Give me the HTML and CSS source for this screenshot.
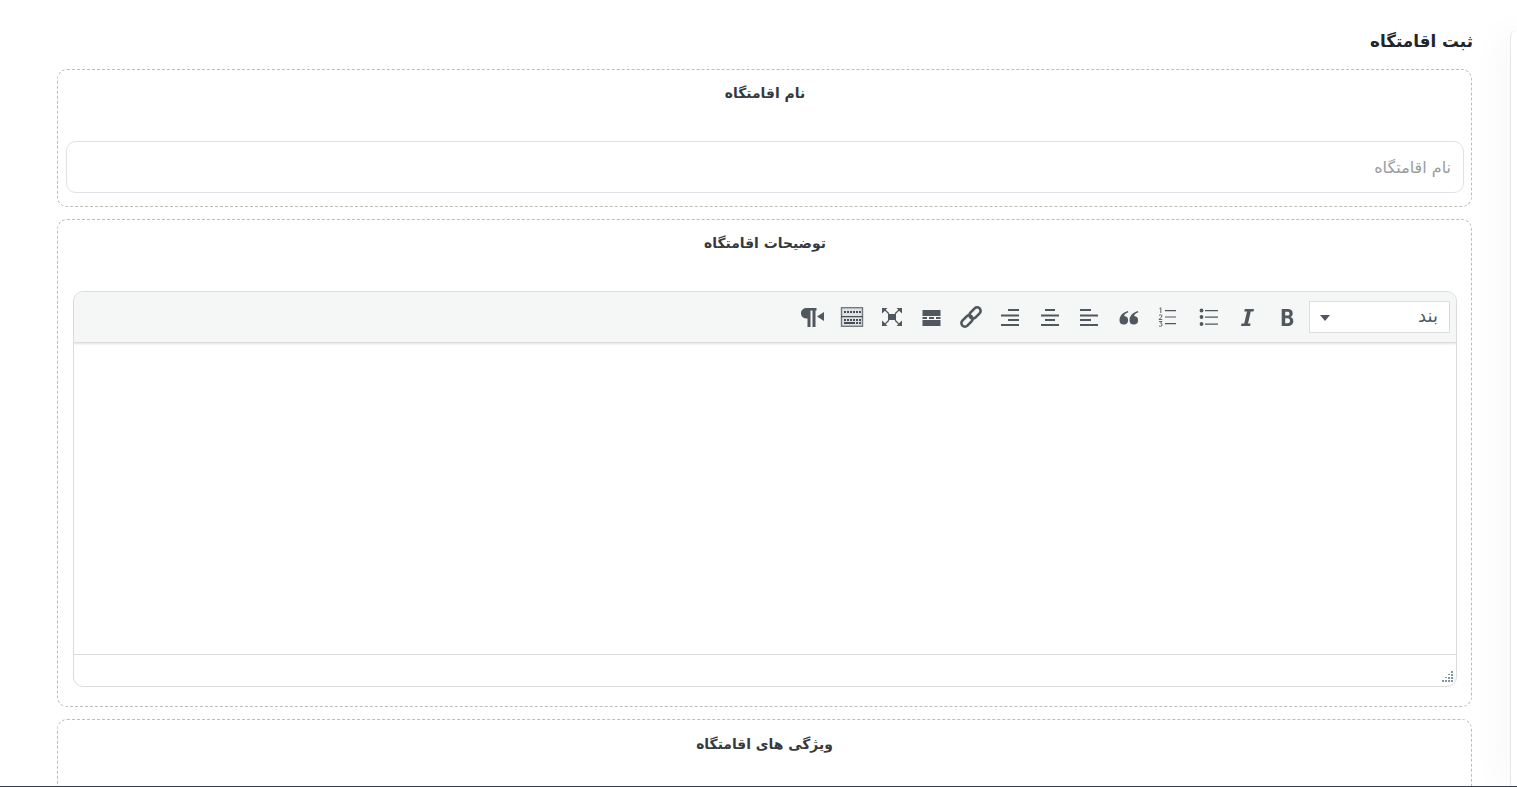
FILE: index.html
```html
<!DOCTYPE html>
<html lang="fa" dir="rtl">
<head>
    <meta charset="UTF-8">
    <meta name="viewport" content="width=device-width, initial-scale=1.0">
    <title>ثبت اقامتگاه</title>
    <link rel="stylesheet" href="styles.css">
</head>
<body>

<div class="page">
    <aside class="side-panel"></aside>

    <main class="content">
        <h1 class="page-title">ثبت اقامتگاه</h1>

        <section class="box box-name">
            <h2 class="box-title">نام اقامتگاه</h2>
            <input class="text-input" type="text" placeholder="نام اقامتگاه">
        </section>

        <section class="box box-desc">
            <h2 class="box-title">توضیحات اقامتگاه</h2>
            <div class="editor">
                <div class="toolbar">
                    <div class="format-select">
                        <span>بند</span>
                        <i class="caret"></i>
                    </div>
                    <div class="tools">
                        <!-- bold -->
                        <button class="tool"><svg viewBox="0 0 20 20"><path fill="#50575e" fill-rule="evenodd" d="M4.700 2h6c3.500 0 5 1.600 5 4.400 0 1.800-.9 3-2.400 3.600 2 .5 3 1.900 3 4 0 3.200-2.200 5-5.600 5h-6zM8.200 4.800v3.800h2.200c1.500 0 2.100-.6 2.100-1.900s-.7-1.900-2.100-1.900zM8.200 11.300v4.900h2.500c1.600 0 2.300-.8 2.300-2.400s-.8-2.500-2.400-2.500z"/></svg></button>
                        <!-- italic -->
                        <button class="tool"><svg viewBox="0 0 20 20"><path fill="#50575e" d="M7.800 2H17l-.5 2.400h-2.700L11 16.600h2.600l-.5 2.400H4l.5-2.400h2.700L10 4.400H7.300z"/></svg></button>
                        <!-- bullet list -->
                        <button class="tool"><svg viewBox="0 0 20 20"><g fill="#50575e"><circle cx="3.500" cy="3.500" r="1.900"/><circle cx="3.500" cy="10" r="1.900"/><circle cx="3.500" cy="17" r="1.900"/><path d="M7 3h13v1.300H7zM7 9.400h13v1.300H7zM7 16.400h13v1.300H7z"/></g></svg></button>
                        <!-- numbered list -->
                        <button class="tool"><svg viewBox="0 0 20 20"><path fill="#50575e" d="M7 3h11v1.200H7zM7 9.400h11v1.200H7zM7 16h11v1.200H7z"/><path fill="none" stroke="#50575e" stroke-width=".9" d="M1.500 1.500 2.800.8V6M1 8.300Q3 7 4 8.500 4 10 1 12.500h3.300M1 14.500h3l-1.500 1.700q2 .3 1.500 2.300Q2.500 19.800 1 19"/></svg></button>
                        <!-- blockquote -->
                        <button class="tool"><svg viewBox="0 0 20 20"><path fill="#50575e" d="M9 4C5 5 .5 8 .5 13.300a4.300 4.300 0 1 0 4.600-4.300C5.500 7.500 7 6 9.300 5.300zM19 4c-4 1-8.500 4-8.500 9.300a4.300 4.300 0 1 0 4.600-4.300c.4-1.500 1.900-3 4.200-3.700z"/></svg></button>
                        <!-- align left -->
                        <button class="tool"><svg viewBox="0 0 20 20"><path fill="#50575e" d="M1 2h11v2H1zM1 7.500h18v2H1zM1 12h11v2H1zM1 17h18v2H1z"/></svg></button>
                        <!-- align center -->
                        <button class="tool"><svg viewBox="0 0 20 20"><path fill="#50575e" d="M5 2h10v2H5zM1 7.500h18v2H1zM5 12h10v2H5zM1 17h18v2H1z"/></svg></button>
                        <!-- align right -->
                        <button class="tool"><svg viewBox="0 0 20 20"><path fill="#50575e" d="M8 2h11v2H8zM1 7.500h18v2H1zM8 12h11v2H8zM1 17h18v2H1z"/></svg></button>
                        <!-- link -->
                        <button class="tool tool-link"><svg viewBox="0 0 24 24"><g fill="none" stroke="#50575e" stroke-width="2.600"><rect x="9.500" y="4.500" width="13" height="7" rx="3.500" transform="rotate(-45 16 8)"/><rect x="1.500" y="12.500" width="13" height="7" rx="3.500" transform="rotate(-45 8 16)"/></g></svg></button>
                        <!-- read more -->
                        <button class="tool"><svg viewBox="0 0 20 20"><path fill="#50575e" d="M1.500 3h18v6h-18zM1.500 13h18v6h-18zM1.500 10h4.500v2H1.500zM8 10h5v2H8zM15 10h4.500v2H15z"/></svg></button>
                        <!-- fullscreen -->
                        <button class="tool"><svg viewBox="0 0 20 20"><path fill="#50575e" d="M6 7h8v6H6zM0 1h5.500L3.700 2.800l3.700 3.400-1 1L3 3.700 0 6.500zM20 1v5.500l-3-2.800-3.400 3.500-1-1 3.700-3.400L14.500 1zM0 19v-5.500l3 2.800 3.400-3.500 1 1-3.700 3.400L5.500 19zM20 19h-5.500l1.800-1.800-3.700-3.400 1-1 3.400 3.500 3-2.800z"/></svg></button>
                        <!-- toolbar toggle -->
                        <button class="tool tool-wide"><svg viewBox="0 0 24 20"><rect x="1.500" y=".7" width="21" height="18.600" fill="#dfe2e4" stroke="#727a80" stroke-width="1.400"/><path fill="#484f55" d="M1 9h22v1.200H1zM4 4h2v2H4zM7 4h2v2H7zM10 4h2v2h-2zM13 4h2v2h-2zM16 4h2v2h-2zM19 4h2v2h-2zM4 12h2v2H4zM7 12h2v2H7zM10 12h2v2h-2zM13 12h2v2h-2zM16 12h2v2h-2zM19 12h2v2h-2zM4 15h11v2H4zM16 15h2v2h-2zM19 15h2v2h-2z"/></svg></button>
                        <!-- paragraph rtl -->
                        <button class="tool tool-wide"><svg viewBox="0 0 24 20"><path fill="#50575e" d="M7 1h9.500v2.500h-1V20h-3V3.500h-2V20h-3v-8.500C3.500 11.500 1 9.500 1 6.200 1 3 3.500 1 7 1zM24 5v9l-7-4.500z"/></svg></button>
                    </div>
                </div>
                <div class="editor-body"></div>
                <div class="statusbar">
                    <svg class="resize-grip" viewBox="0 0 12 12"><path fill="#7f97aa" d="M10 0h2v2h-2zM7 3h2v1H7zM10 3h2v2h-2zM4 6h2v1H4zM7 6h2v2H7zM10 6h2v2h-2zM1 9h2v2H1zM4 9h2v2H4zM7 9h2v2H7zM10 9h2v2h-2z"/></svg>
                </div>
            </div>
        </section>

        <section class="box box-features">
            <h2 class="box-title">ویژگی های اقامتگاه</h2>
        </section>
    </main>
</div>

<div class="bottom-line"></div>

</body>
</html>
```

FILE: styles.css
```css
html, body {
    height: 100%;
}

body {
    margin: 0;
    background-color: #fff;
    color: #212529;
    font-family: 'DejaVu Sans', 'Noto Sans', sans-serif;
    overflow: hidden;
}

.page {
    display: flex;
    height: 786px;
    overflow: hidden;
}

.side-panel {
    flex: 0 0 6px;
    margin-top: 30px;
    background-color: #fff;
    border-left: 1px solid #e6e6e6;
    border-top-left-radius: 8px;
    box-shadow: 0 0 36px rgba(0, 0, 0, 0.12);
}

.content {
    width: 1415px;
    margin-right: 38px;
    flex: none;
}

.page-title {
    margin: 30px -1px 0 0;
    height: 39px;
    font-size: 16.800px;
    line-height: 22px;
    font-weight: 700;
    color: #212529;
}

.box {
    border: 1px dashed #bdbdbd;
    border-radius: 10px;
    margin-bottom: 12px;
}

.box-name {
    height: 136px;
    padding: 0 7px 0 8px;
}

.box-desc {
    height: 486px;
    padding: 0 14px 0 15px;
}

.box-features {
    height: 200px;
}

.box-title {
    margin: 14px 0 0;
    height: 20px;
    text-align: center;
    font-size: 13.900px;
    line-height: 18px;
    font-weight: 700;
    color: #343a40;
}

.box-features .box-title {
    margin-top: 15px;
}

.text-input {
    display: block;
    box-sizing: border-box;
    width: 100%;
    height: 52px;
    margin-top: 37px;
    padding: 0 12px;
    border: 1px solid #dee2e6;
    border-radius: 10px;
    background: #fff;
    font-family: inherit;
    font-size: 16px;
    outline: none;
}

.text-input::placeholder {
    color: #999da1;
}

.box-desc .box-title {
    margin-bottom: 37px;
}

.editor {
    height: 396px;
    box-sizing: border-box;
    border: 1px solid #dcdcdc;
    border-radius: 10px;
    overflow: hidden;
    display: flex;
    flex-direction: column;
}

.toolbar {
    height: 50px;
    flex: none;
    display: flex;
    align-items: center;
    padding-right: 6px;
    background-color: #f5f6f6;
    border-bottom: 1px solid #dcdcdc;
    box-shadow: 0 1px 2px rgba(0, 0, 0, 0.12);
    position: relative;
}

.format-select {
    box-sizing: border-box;
    width: 141px;
    height: 32px;
    display: flex;
    justify-content: space-between;
    align-items: center;
    padding: 0 11px 3px 10px;
    background-color: #fff;
    border: 1px solid #dcdcdc;
    font-size: 18px;
    color: #50575e;
}

.caret {
    width: 0;
    height: 0;
    border-left: 5px solid transparent;
    border-right: 5px solid transparent;
    border-top: 6px solid #50575e;
    margin-top: 5px;
}

.tools {
    display: flex;
    align-items: center;
    margin-right: 12px;
    gap: 19.550px;
}

.tool {
    width: 20px;
    height: 20px;
    padding: 0;
    border: none;
    background: none;
    display: block;
}

.tool svg {
    display: block;
    width: 100%;
    height: 100%;
}

/* a bit wider than the others, keeps the same step */
.tool-wide {
    width: 24px;
    margin: 0 -2px;
}

.tool-link {
    width: 24px;
    height: 24px;
    margin: -2px;
}

.editor-body {
    flex: 1;
    background-color: #fff;
}

.statusbar {
    height: 31px;
    flex: none;
    border-top: 1px solid #dcdcdc;
    position: relative;
}

.resize-grip {
    position: absolute;
    right: 3px;
    bottom: 3px;
    width: 12px;
    height: 12px;
}

.bottom-line {
    height: 1px;
    background-color: #343a55;
}
```
